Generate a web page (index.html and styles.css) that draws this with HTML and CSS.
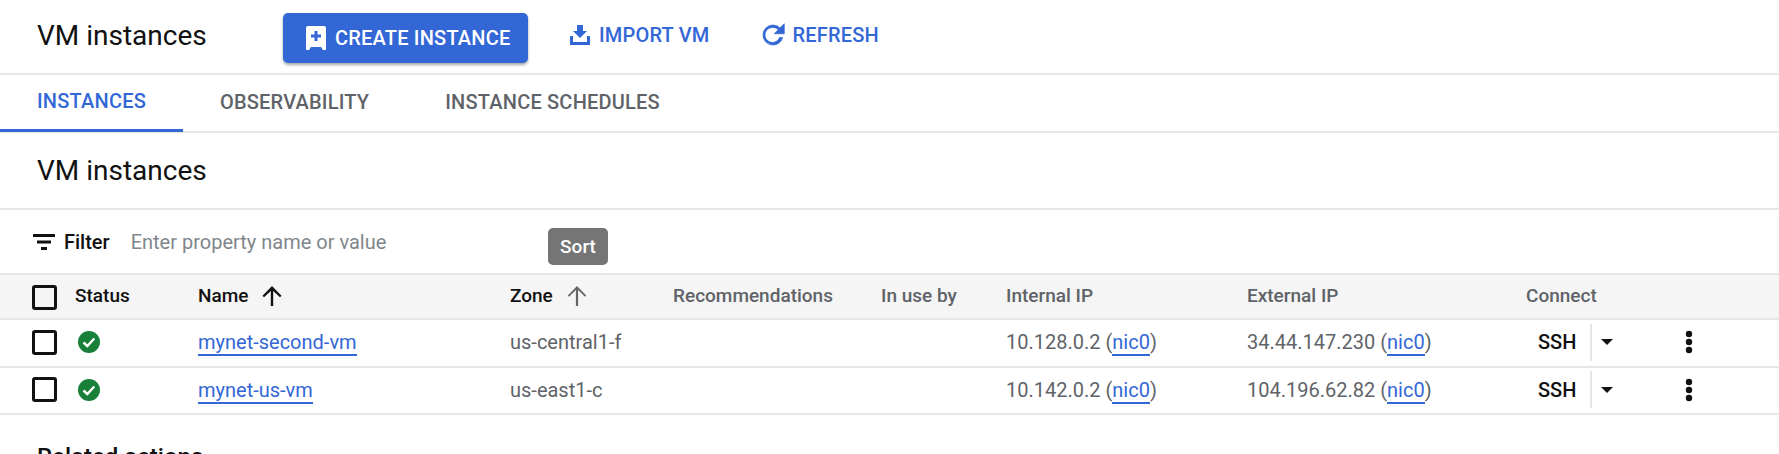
FILE: index.html
```html
<!DOCTYPE html>
<html lang="en">
<head>
<meta charset="utf-8">
<title>VM instances</title>
<link rel="stylesheet" href="styles.css">
</head>
<body>
<header class="topbar">
  <h1 class="title topbar-title">VM instances</h1>
  <button class="btn-primary">
    <svg class="ic-create" viewBox="0 0 20 24"><path fill="#fff" d="M2 0h16a2 2 0 0 1 2 2v22h-3l-2-3H5l-2 3H0V2a2 2 0 0 1 2-2z"/><path fill="#3367d6" d="M8.500 5h3v3.500H15v3h-3.500V15h-3v-3.500H5v-3h3.500z"/></svg>
    CREATE INSTANCE
  </button>
  <a class="btn-text btn-import">
    <svg class="ic-import" viewBox="0 0 20 20"><path fill="#3367d6" d="M7 0h6v6h4l-7 7-7-7h4zM0 11h3v6h14v-6h3v9H0z"/></svg>
    IMPORT VM
  </a>
  <a class="btn-text btn-refresh">
    <svg class="ic-refresh" viewBox="0 0 24 24"><path fill="#3367d6" d="M17.650 6.350A7.950 7.950 0 0 0 12 4a8 8 0 1 0 7.730 10h-2.500A6 6 0 1 1 12 6c1.660 0 3.140.690 4.220 1.780L13 11h8V3z" stroke="#3367d6" stroke-width=".6"/></svg>
    REFRESH
  </a>
</header>
<nav class="tabs">
  <a class="tab tab-active">INSTANCES</a>
  <a class="tab">OBSERVABILITY</a>
  <a class="tab">INSTANCE SCHEDULES</a>
</nav>
<section class="section-head">
  <h2 class="title">VM instances</h2>
</section>
<div class="filter">
  <svg class="ic-filter" viewBox="0 0 22 16"><path fill="#111" d="M0 0h22v3H0zM4 6.500h14v3H4zM8 13h6v3H8z"/></svg>
  <span class="filter-label">Filter</span>
  <span class="filter-hint">Enter property name or value</span>
  <span class="tooltip">Sort</span>
</div>
<div class="table">
  <div class="row row-head">
    <span class="check"></span>
    <span class="strong">Status</span>
    <span class="strong with-arrow">Name
      <svg class="ic-arrow" viewBox="0 0 20 20"><path fill="#111" d="M8.800 20V5L2 11.200 0.500 9.800 10 0l9.500 9.800-1.500 1.400L11.200 5v15z"/></svg>
    </span>
    <span class="strong with-arrow">Zone
      <svg class="ic-arrow" viewBox="0 0 20 20"><path fill="#666" d="M8.900 20V4L2 10.800 0.800 9.600 10 0l9.200 9.600-1.200 1.200L11.100 4v16z"/></svg>
    </span>
    <span class="head-muted">Recommendations</span>
    <span class="head-muted">In use by</span>
    <span class="head-muted">Internal IP</span>
    <span class="head-muted">External IP</span>
    <span class="head-muted">Connect</span>
  </div>
  <div class="row row-a">
    <span class="check"></span>
    <svg class="ic-ok" viewBox="0 0 22 22"><circle cx="11" cy="11" r="11" fill="#188038"/><path d="M5.500 11.500l3.800 3.500 7-7.500" fill="none" stroke="#fff" stroke-width="2.400"/></svg>
    <span><a class="link">mynet-second-vm</a></span>
    <span>us-central1-f</span>
    <span></span>
    <span></span>
    <span>10.128.0.2 (<a class="link">nic0</a>)</span>
    <span>34.44.147.230 (<a class="link">nic0</a>)</span>
    <div class="connect">
      <span class="ssh">SSH</span>
      <span class="split"><i class="caret"></i></span>
      <svg class="ic-more" viewBox="0 0 8 24"><circle cx="4" cy="4" r="3.200" fill="#111"/><circle cx="4" cy="12" r="3.200" fill="#111"/><circle cx="4" cy="20" r="3.200" fill="#111"/></svg>
    </div>
  </div>
  <div class="row row-b">
    <span class="check"></span>
    <svg class="ic-ok" viewBox="0 0 22 22"><circle cx="11" cy="11" r="11" fill="#188038"/><path d="M5.500 11.500l3.800 3.500 7-7.500" fill="none" stroke="#fff" stroke-width="2.400"/></svg>
    <span><a class="link">mynet-us-vm</a></span>
    <span>us-east1-c</span>
    <span></span>
    <span></span>
    <span>10.142.0.2 (<a class="link">nic0</a>)</span>
    <span>104.196.62.82 (<a class="link">nic0</a>)</span>
    <div class="connect">
      <span class="ssh">SSH</span>
      <span class="split"><i class="caret"></i></span>
      <svg class="ic-more" viewBox="0 0 8 24"><circle cx="4" cy="4" r="3.200" fill="#111"/><circle cx="4" cy="12" r="3.200" fill="#111"/><circle cx="4" cy="20" r="3.200" fill="#111"/></svg>
    </div>
  </div>
</div>
<h3 class="related">Related actions</h3>
</body>
</html>
```
FILE: styles.css
```css
* { box-sizing: border-box; }
html, body { margin: 0; height: 454px; overflow: hidden; background: #fff; }
body { font-family: Roboto, "Liberation Sans", sans-serif; color: #5f6368; font-size: 20px; }
.title { margin: 0; font-size: 28px; font-weight: 400; color: #111; line-height: 36px; }
.topbar { display: flex; align-items: center; height: 75px; border-bottom: 2px solid #e6e6e6; padding-left: 37px; }
.topbar-title { width: 246px; margin-bottom: 2px; }
.btn-primary { display: flex; align-items: center; width: 245px; height: 50px; padding: 0 0 0 23px; gap: 9px; border: 0; border-radius: 5px; background: #3367d6; color: #fff; font: 500 20px Roboto, sans-serif; letter-spacing: .2px; box-shadow: 0 2px 3px rgba(60,64,67,.45); white-space: nowrap; margin-top: 2px; }
.ic-create { width: 20px; height: 24px; flex: none; }
.btn-text { display: flex; align-items: center; color: #3367d6; font-weight: 500; letter-spacing: .2px; white-space: nowrap; margin-bottom: 3px; }
.btn-import { margin-left: 42px; margin-right: 48px; gap: 9px; }
.btn-refresh { gap: 5px; }
.ic-import { width: 20px; height: 20px; }
.ic-refresh { width: 30px; height: 30px; }
.tabs { display: flex; height: 58px; border-bottom: 2px solid #e6e6e6; font-weight: 500; letter-spacing: .2px; }
.tab { display: flex; align-items: center; height: 56px; padding: 0 37px 2px; margin-right: 2px; color: #5f6368; white-space: nowrap; }
.tab-active { color: #3367d6; border-bottom: 3px solid #3367d6; height: 57px; margin-right: 0; }
.section-head { height: 77px; padding: 20px 0 0 37px; border-bottom: 2px solid #e6e6e6; }
.filter { display: flex; align-items: center; height: 63px; padding-left: 33px; position: relative; }
.ic-filter { width: 22px; height: 16px; margin-right: 9px; }
.filter-label { color: #111; font-weight: 500; margin-right: 21px; }
.filter-hint { color: #80868b; }
.tooltip { position: absolute; left: 548px; top: 18px; width: 60px; height: 37px; border-radius: 5px; background: #757575; color: #fff; font-weight: 500; font-size: 19px; display: flex; align-items: center; justify-content: center; }
.table { display: flex; flex-direction: column; }
.row { display: grid; grid-template-columns: 43px 123px 312px 163px 208px 125px 241px 279px 1fr; align-items: center; padding: 0 0 2px 32px; border-bottom: 2px solid #e6e6e6; white-space: nowrap; }
.row-head { height: 47px; background: #f5f5f5; border-top: 2px solid #e6e6e6; font-size: 19px; }
.row-head .check { margin-top: 4px; }
.row-a { height: 48px; }
.row-b { height: 47px; }
.check { width: 25px; height: 25px; border: 3px solid #111; border-radius: 3px; }
.strong { color: #111; font-weight: 500; }
.head-muted { color: #5f6368; font-weight: 500; }
.with-arrow { display: flex; align-items: center; gap: 14px; }
.ic-arrow { width: 20px; height: 20px; }
.ic-ok { width: 22px; height: 22px; margin-left: 3px; }
.link { color: #3367d6; border-bottom: 2px solid #3367d6; }
.connect { display: flex; align-items: center; height: 100%; }
.ssh { color: #111; font-weight: 500; margin-left: 12px; width: 52px; }
.split { display: flex; align-items: center; height: 37px; border-left: 2px solid #e6e6e6; padding-left: 9px; }
.caret { width: 0; height: 0; border-left: 6px solid transparent; border-right: 6px solid transparent; border-top: 6px solid #111; }
.ic-more { width: 8px; height: 24px; margin-left: 72px; }
.related { margin: 28px 0 0 37px; font-size: 24px; font-weight: 500; color: #111; }
```
